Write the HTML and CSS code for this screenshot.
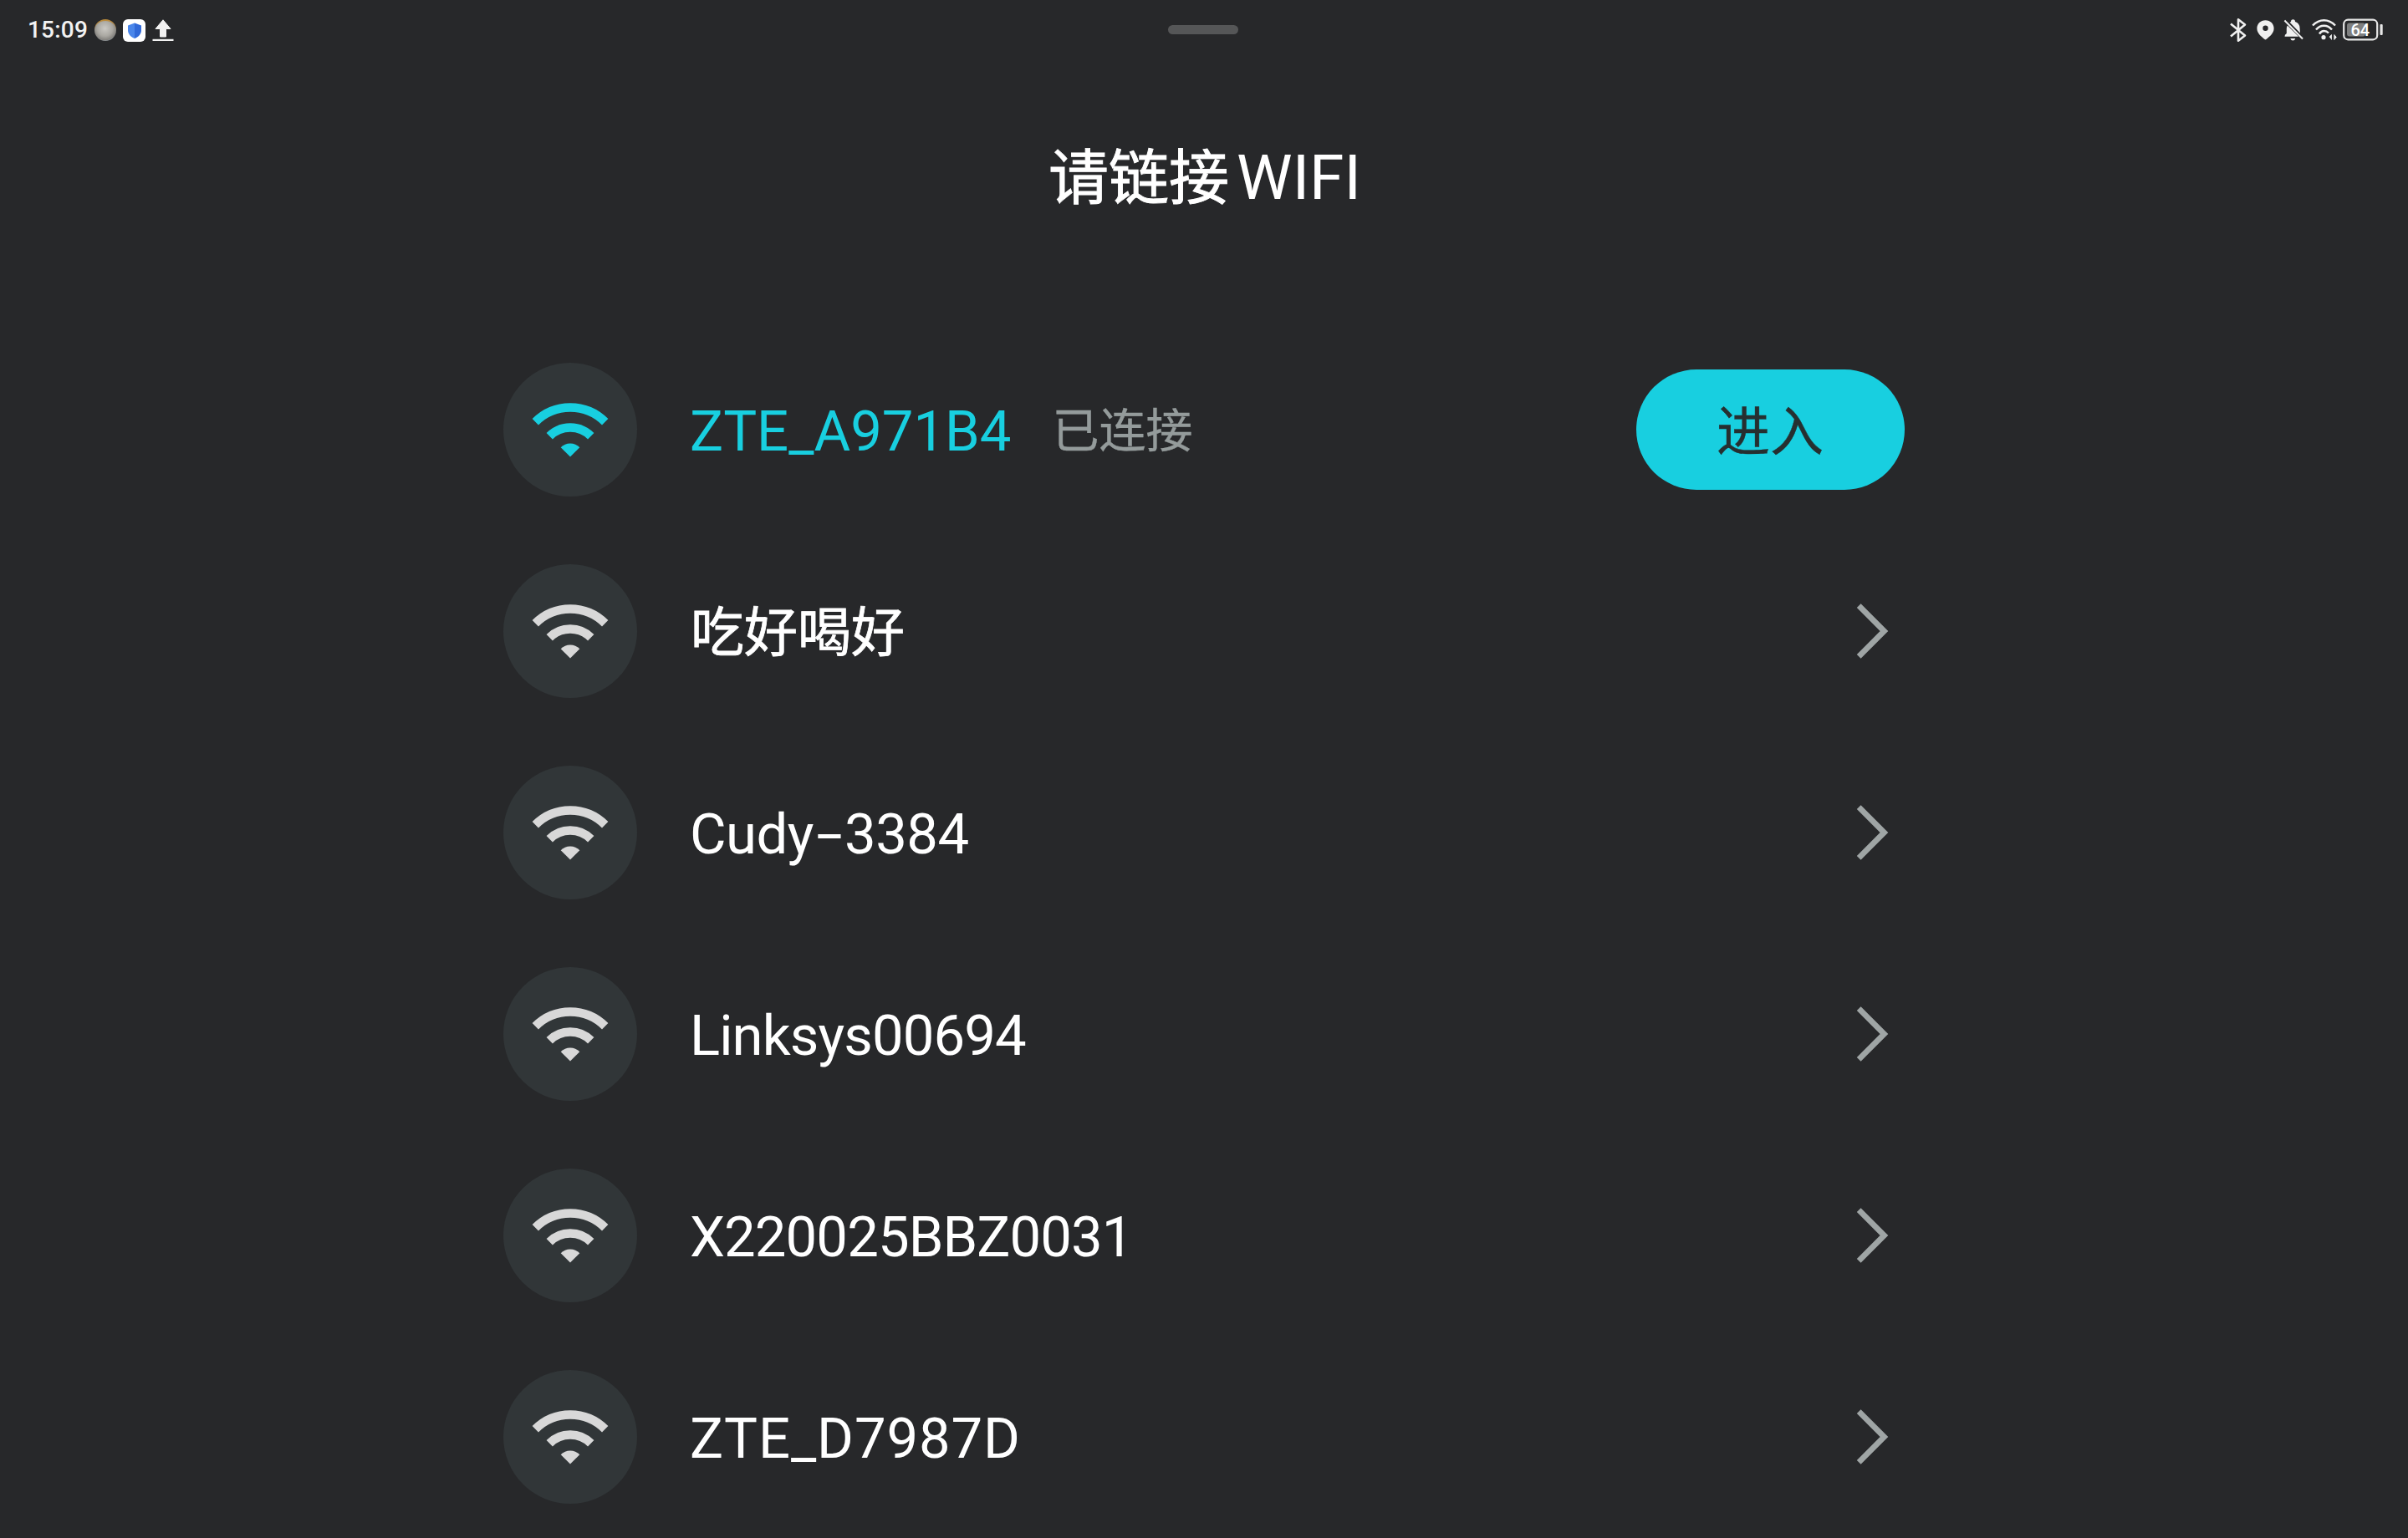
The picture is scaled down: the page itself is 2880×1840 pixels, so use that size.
FILE: index.html
```html
<!DOCTYPE html>
<html lang="zh-CN">
<head>
<meta charset="utf-8">
<title>请链接WIFI</title>
<link rel="stylesheet" href="styles.css">
</head>
<body>
<svg class="sprites" aria-hidden="true">
  <symbol id="wifi" viewBox="0 0 160 160">
    <path d="M38.3 70.8A59 59 0 0 1 121.7 70.8M55.25 87.75A35 35 0 0 1 104.75 87.75" fill="none" stroke="currentColor" stroke-width="10.4"/>
    <path d="M80 112.5L68.7 101.2A16 16 0 0 1 91.3 101.2Z" fill="currentColor"/>
  </symbol>
  <symbol id="chevron" viewBox="0 0 42 72">
    <path d="M3.2 5.7L33.5 36L3.2 66.3" fill="none" stroke="currentColor" stroke-width="6.8"/>
  </symbol>
</svg>

<header class="status">
  <div class="status-left">
    <span class="clock">15:09</span>
    <span class="orb"></span>
    <svg class="shield" viewBox="0 0 27 27">
      <rect width="27" height="27" rx="6" fill="#fff"/>
      <path d="M14 4.5L6 7.5V13C6 17.5 9 21 14 23Z" fill="#4a86ea"/>
      <path d="M14 4.5L22 7.5V13C22 17.5 19 21 14 23Z" fill="#3069d8"/>
    </svg>
    <svg class="upload" viewBox="0 0 26 27">
      <path d="M13 .8L22 11.5H16.5V21H9.5V11.5H4Z" fill="#f2f2f2" stroke="#f2f2f2" stroke-width="1" stroke-linejoin="round"/>
      <rect x=".5" y="23.8" width="25" height="2.2" fill="#f2f2f2"/>
    </svg>
  </div>
  <span class="handle"></span>
  <div class="status-right">
    <svg class="bluetooth" viewBox="0 0 20 30">
      <path d="M1 7.5L18 21.5L10 27.7V2.3L18 8.5L1 22.5" fill="none" stroke="#f0f0f0" stroke-width="2.6" stroke-linejoin="round"/>
    </svg>
    <svg class="pin" viewBox="0 0 21 30">
      <path fill-rule="evenodd" fill="#f0f0f0" d="M10.5 3.3C4.6 3.3.4 7.7.4 13C.4 19 5.5 22.5 9.5 26Q10.5 26.8 11.5 26C15.5 22.5 20.6 19 20.6 13C20.6 7.7 16.4 3.3 10.5 3.3ZM10.5 9.6A3.2 3.2 0 1 1 10.5 16A3.2 3.2 0 1 1 10.5 9.6Z"/>
    </svg>
    <svg class="bell" viewBox="0 0 24 30">
      <path fill="#f0f0f0" d="M9 5Q9 2.3 11.5 2.3T14 5Q19 6.5 19.5 12L20 18.5L7.6 5.7ZM4.8 9.5L18.2 22.8H1.5Q1.2 20.5 3.8 19V13Q3.8 11 4.8 9.5ZM8.3 25H14.3Q13.5 27.5 11.3 27.5T8.3 25Z"/>
      <path d="M1.4 3.5L23 25.5" stroke="#f0f0f0" stroke-width="2"/>
    </svg>
    <svg class="signal" viewBox="0 0 31 30">
      <g fill="none" stroke="#f0f0f0" stroke-width="2.5">
        <path d="M1 9.500Q7 3.200 14.500 3.200T28 9.500M5 14.500Q9 9.800 14.500 9.800T24 14.500M9 19.500Q11.200 16 14.500 16T20 18.500"/>
      </g>
      <circle cx="14" cy="23.7" r="2.6" fill="#f0f0f0"/>
      <path d="M23.5 26.5V20.5L21 23.2M26.800 20.5V26.5L29.3 23.5Z" fill="#f0f0f0" stroke="#f0f0f0" stroke-width=".8"/>
    </svg>
    <svg class="battery" viewBox="0 0 49 30">
      <rect x="1.2" y="2.7" width="40" height="23.6" rx="5" fill="none" stroke="#e6e6e6" stroke-width="2.2"/>
      <rect x="5" y="6.5" width="22" height="16" rx="3" fill="#7f8080"/>
      <rect x="44.5" y="8" width="3.2" height="13" rx="1" fill="#e6e6e6"/>
      <text x="20.8" y="22" text-anchor="middle" class="battery-level">64</text>
    </svg>
  </div>
</header>

<main class="page">
  <h1 class="title"><span class="title-cjk">请链接</span><span class="title-latin">WIFI</span></h1>
  <ul class="networks">
    <li class="network connected">
      <span class="badge"><svg><use href="#wifi"/></svg></span>
      <span class="name name-a">ZTE_A971B4</span>
      <span class="state">已连接</span>
      <button class="enter">进入</button>
    </li>
    <li class="network">
      <span class="badge"><svg><use href="#wifi"/></svg></span>
      <span class="name name-cjk">吃好喝好</span>
      <svg class="chevron"><use href="#chevron"/></svg>
    </li>
    <li class="network">
      <span class="badge"><svg><use href="#wifi"/></svg></span>
      <span class="name name-cudy">Cudy<span class="dash">-</span>3384</span>
      <svg class="chevron"><use href="#chevron"/></svg>
    </li>
    <li class="network">
      <span class="badge"><svg><use href="#wifi"/></svg></span>
      <span class="name name-linksys">Linksys00694</span>
      <svg class="chevron"><use href="#chevron"/></svg>
    </li>
    <li class="network">
      <span class="badge"><svg><use href="#wifi"/></svg></span>
      <span class="name name-x">X220025BBZ0031</span>
      <svg class="chevron"><use href="#chevron"/></svg>
    </li>
    <li class="network">
      <span class="badge"><svg><use href="#wifi"/></svg></span>
      <span class="name name-d">ZTE_D7987D</span>
      <svg class="chevron"><use href="#chevron"/></svg>
    </li>
  </ul>
</main>
</body>
</html>
```

FILE: styles.css
```css
* { box-sizing: border-box; }

body {
  margin: 0;
  width: 2880px;
  height: 1840px;
  overflow: hidden;
  background: #27282a;
  color: #fff;
  font-family: Roboto, "Noto Sans CJK SC", sans-serif;
}

svg { display: block; }

.sprites {
  position: absolute;
  width: 0;
  height: 0;
}

/* Status bar */
.status {
  display: grid;
  grid-template-columns: 1fr 84px 1fr;
  align-items: center;
  height: 72px;
  padding: 0 30px 0 28px;
}

.status-left,
.status-right {
  display: flex;
  align-items: center;
}

.status-left { padding-left: 5px; }
.status-right { justify-content: flex-end; }

.clock {
  width: 80px;
  font-size: 28px;
  line-height: 32px;
  font-weight: 500;
  letter-spacing: 0.2px;
  color: #f2f2f2;
}

.orb {
  width: 26px;
  height: 26px;
  margin-right: 8px;
  border-radius: 50%;
  background: radial-gradient(circle at 48% 38%, #cbc9c4 0, #aaa8a2 45%, #85837f 68%, #a9cbe8 92%);
  border-top: 2px solid #b98a3c;
}

.shield { width: 27px; height: 27px; margin-right: 8px; }
.upload { width: 26px; height: 27px; }

.handle {
  height: 11px;
  margin-bottom: 1px;
  border-radius: 6px;
  background: #555657;
}

.bluetooth { width: 20px; height: 30px; margin-right: 12px; }
.pin { width: 21px; height: 30px; margin-right: 11px; }
.bell { width: 24px; height: 30px; margin-right: 10px; }
.signal { width: 31px; height: 30px; margin-right: 6px; }
.battery { width: 49px; height: 30px; margin-right: -1px; }

.battery-level {
  font-size: 20px;
  font-weight: 500;
  fill: #fff;
}

/* Network list */
.page {
  width: 1676px;
  margin: 0 auto;
}

.title {
  display: flex;
  justify-content: center;
  align-items: baseline;
  height: 282px;
  margin: 0 0 80px;
  padding: 80px 0 0 2px;
  font-size: 72px;
  line-height: 120px;
  font-weight: 400;
}

.title-cjk { -webkit-text-stroke: 0.9px currentColor; }

.title-latin {
  margin-left: 9px;
  font-size: 75px;
}

.networks {
  display: flex;
  flex-direction: column;
  gap: 81px;
  margin: 0;
  padding: 0;
  list-style: none;
}

.network {
  display: flex;
  align-items: center;
  height: 160px;
}

.badge {
  width: 160px;
  height: 160px;
  margin-right: 63px;
  border-radius: 50%;
  background: #313638;
  color: #d8d8d8;
}

.badge svg { width: 160px; height: 160px; }

.name {
  padding-top: 4px;
  font-size: 67px;
  line-height: 96px;
  font-kerning: none;
}

.name-cjk {
  padding: 5px 0 0 1px;
  font-size: 64px;
  -webkit-text-stroke: 0.8px currentColor;
}

.name-cudy { letter-spacing: -0.5px; }
.name-linksys { letter-spacing: -0.9px; }
.name-x { letter-spacing: -0.9px; }
.name-d { letter-spacing: 0.9px; }

.dash {
  display: inline-block;
  width: 37px;
  text-align: center;
  transform: scaleX(1.7);
}

.connected .badge,
.connected .name { color: #18cfe0; }

.state {
  margin-left: 49px;
  padding-top: 4px;
  font-size: 56px;
  line-height: 96px;
  color: #949b9b;
  -webkit-text-stroke: 0.4px currentColor;
}

.enter {
  width: 321px;
  height: 144px;
  margin-left: auto;
  padding: 0 1px 7px 0;
  border: 0;
  border-radius: 72px;
  background: #18cfe0;
  color: #262f30;
  font: 400 64px/96px "Noto Sans CJK SC", sans-serif;
  -webkit-text-stroke: 0.4px currentColor;
}

.chevron {
  width: 42px;
  height: 72px;
  margin-left: auto;
  margin-right: 16px;
  color: #9fa5a5;
}
```
